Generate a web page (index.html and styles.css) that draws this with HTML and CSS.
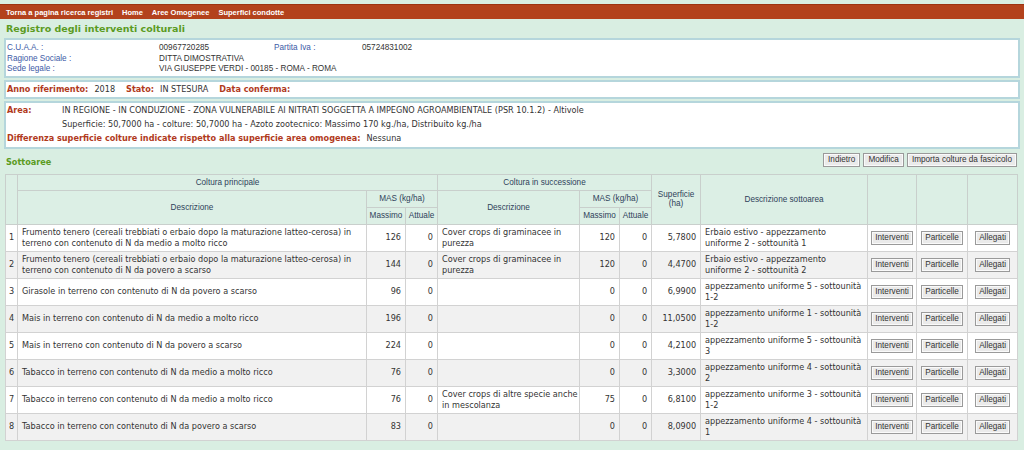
FILE: index.html
```html
<!DOCTYPE html>
<html lang="it">
<head>
<meta charset="utf-8">
<title>Registro degli interventi colturali</title>
<link rel="stylesheet" href="styles.css">
</head>
<body>
<div class="page">
  <nav class="topbar">
    <a href="#">Torna a pagina ricerca registri</a>
    <a href="#">Home</a>
    <a href="#">Aree Omogenee</a>
    <a href="#">Superfici condotte</a>
  </nav>
  <h1 class="title">Registro degli interventi colturali</h1>

  <div class="box anag">
    <span class="lbl">C.U.A.A. :</span><span class="val">00967720285</span><span class="lbl">Partita Iva :</span><span class="val">05724831002</span>
    <span class="lbl">Ragione Sociale :</span><span class="val span3">DITTA DIMOSTRATIVA</span>
    <span class="lbl">Sede legale :</span><span class="val span3">VIA GIUSEPPE VERDI - 00185 - ROMA - ROMA</span>
  </div>

  <div class="box info">
    <span class="rlbl">Anno riferimento:</span><span class="rval">2018</span>
    <span class="rlbl">Stato:</span><span class="rval">IN STESURA</span>
    <span class="rlbl">Data conferma:</span>
  </div>

  <div class="box area">
    <div class="arow"><span class="rlbl alab">Area:</span><span class="rval">IN REGIONE - IN CONDUZIONE - ZONA VULNERABILE AI NITRATI SOGGETTA A IMPEGNO AGROAMBIENTALE (PSR 10.1.2) - Altivole</span></div>
    <div class="arow"><span class="alab"></span><span class="rval">Superficie: 50,7000 ha - colture: 50,7000 ha - Azoto zootecnico: Massimo 170 kg./ha, Distribuito kg./ha</span></div>
    <div class="arow"><span class="rlbl">Differenza superficie colture indicate rispetto alla superficie area omogenea:</span><span class="rval nes">Nessuna</span></div>
  </div>

  <div class="subhead">
    <h2 class="sub">Sottoaree</h2>
    <div class="actions">
      <button class="btn">Indietro</button>
      <button class="btn">Modifica</button>
      <button class="btn">Importa colture da fascicolo</button>
    </div>
  </div>

  <table class="grid">
    <colgroup>
      <col style="width:12px"><col style="width:349px"><col style="width:39px"><col style="width:32px">
      <col style="width:142px"><col style="width:40px"><col style="width:32px"><col style="width:49px">
      <col style="width:167px"><col style="width:49px"><col style="width:51px"><col style="width:50px">
    </colgroup>
    <thead>
      <tr class="h1">
        <th rowspan="3"></th>
        <th colspan="3">Coltura principale</th>
        <th colspan="3">Coltura in successione</th>
        <th rowspan="3">Superficie<br>(ha)</th>
        <th rowspan="3">Descrizione sottoarea</th>
        <th rowspan="3"></th><th rowspan="3"></th><th rowspan="3"></th>
      </tr>
      <tr class="h2">
        <th rowspan="2">Descrizione</th>
        <th colspan="2">MAS (kg/ha)</th>
        <th rowspan="2">Descrizione</th>
        <th colspan="2">MAS (kg/ha)</th>
      </tr>
      <tr class="h3">
        <th>Massimo</th><th>Attuale</th><th>Massimo</th><th>Attuale</th>
      </tr>
    </thead>
    <tbody>
      <tr>
        <td class="idx">1</td>
        <td>Frumento tenero (cereali trebbiati o erbaio dopo la maturazione latteo-cerosa) in terreno con contenuto di N da medio a molto ricco</td>
        <td class="num">126</td><td class="num">0</td>
        <td class="sc">Cover crops di graminacee in purezza</td>
        <td class="num">120</td><td class="num">0</td><td class="num">5,7800</td>
        <td class="sd">Erbaio estivo - appezzamento uniforme 2 - sottounità 1</td>
        <td class="b"><button class="btn">Interventi</button></td><td class="b"><button class="btn">Particelle</button></td><td class="b"><button class="btn">Allegati</button></td>
      </tr>
      <tr>
        <td class="idx">2</td>
        <td>Frumento tenero (cereali trebbiati o erbaio dopo la maturazione latteo-cerosa) in terreno con contenuto di N da povero a scarso</td>
        <td class="num">144</td><td class="num">0</td>
        <td class="sc">Cover crops di graminacee in purezza</td>
        <td class="num">120</td><td class="num">0</td><td class="num">4,4700</td>
        <td class="sd">Erbaio estivo - appezzamento uniforme 2 - sottounità 2</td>
        <td class="b"><button class="btn">Interventi</button></td><td class="b"><button class="btn">Particelle</button></td><td class="b"><button class="btn">Allegati</button></td>
      </tr>
      <tr>
        <td class="idx">3</td>
        <td>Girasole in terreno con contenuto di N da povero a scarso</td>
        <td class="num">96</td><td class="num">0</td>
        <td class="sc"></td>
        <td class="num">0</td><td class="num">0</td><td class="num">6,9900</td>
        <td class="sd">appezzamento uniforme 5 - sottounità 1-2</td>
        <td class="b"><button class="btn">Interventi</button></td><td class="b"><button class="btn">Particelle</button></td><td class="b"><button class="btn">Allegati</button></td>
      </tr>
      <tr>
        <td class="idx">4</td>
        <td>Mais in terreno con contenuto di N da medio a molto ricco</td>
        <td class="num">196</td><td class="num">0</td>
        <td class="sc"></td>
        <td class="num">0</td><td class="num">0</td><td class="num">11,0500</td>
        <td class="sd">appezzamento uniforme 1 - sottounità 1-2</td>
        <td class="b"><button class="btn">Interventi</button></td><td class="b"><button class="btn">Particelle</button></td><td class="b"><button class="btn">Allegati</button></td>
      </tr>
      <tr>
        <td class="idx">5</td>
        <td>Mais in terreno con contenuto di N da povero a scarso</td>
        <td class="num">224</td><td class="num">0</td>
        <td class="sc"></td>
        <td class="num">0</td><td class="num">0</td><td class="num">4,2100</td>
        <td class="sd">appezzamento uniforme 5 - sottounità 3</td>
        <td class="b"><button class="btn">Interventi</button></td><td class="b"><button class="btn">Particelle</button></td><td class="b"><button class="btn">Allegati</button></td>
      </tr>
      <tr>
        <td class="idx">6</td>
        <td>Tabacco in terreno con contenuto di N da medio a molto ricco</td>
        <td class="num">76</td><td class="num">0</td>
        <td class="sc"></td>
        <td class="num">0</td><td class="num">0</td><td class="num">3,3000</td>
        <td class="sd">appezzamento uniforme 4 - sottounità 2</td>
        <td class="b"><button class="btn">Interventi</button></td><td class="b"><button class="btn">Particelle</button></td><td class="b"><button class="btn">Allegati</button></td>
      </tr>
      <tr>
        <td class="idx">7</td>
        <td>Tabacco in terreno con contenuto di N da medio a molto ricco</td>
        <td class="num">76</td><td class="num">0</td>
        <td class="sc">Cover crops di altre specie anche in mescolanza</td>
        <td class="num">75</td><td class="num">0</td><td class="num">6,8100</td>
        <td class="sd">appezzamento uniforme 3 - sottounità 1-2</td>
        <td class="b"><button class="btn">Interventi</button></td><td class="b"><button class="btn">Particelle</button></td><td class="b"><button class="btn">Allegati</button></td>
      </tr>
      <tr>
        <td class="idx">8</td>
        <td>Tabacco in terreno con contenuto di N da povero a scarso</td>
        <td class="num">83</td><td class="num">0</td>
        <td class="sc"></td>
        <td class="num">0</td><td class="num">0</td><td class="num">8,0900</td>
        <td class="sd">appezzamento uniforme 4 - sottounità 1</td>
        <td class="b"><button class="btn">Interventi</button></td><td class="b"><button class="btn">Particelle</button></td><td class="b"><button class="btn">Allegati</button></td>
      </tr>
    </tbody>
  </table>
</div>
</body>
</html>
```

FILE: styles.css
```css
html, body {
  margin: 0;
  padding: 0;
  background: #d9eee2;
}
.page {
  padding-top: 4px;
  font-family: "DejaVu Sans", Verdana, sans-serif;
  font-size: 8.15px;
  color: #333;
}
.topbar {
  background: #b3421c;
  border-top: 1px solid #9c3412;
  height: 14px;
  display: flex;
  align-items: center;
  gap: 9px;
  padding-left: 6px;
}
.topbar a {
  color: #fff;
  text-decoration: none;
  font-family: "Liberation Sans", Arial, sans-serif;
  font-weight: bold;
  font-size: 7.5px;
}
.title {
  margin: 0;
  padding: 4px 0 0 6px;
  height: 15px;
  font-size: 9.5px;
  font-weight: bold;
  color: #5b9b22;
  font-family: "DejaVu Sans", Verdana, sans-serif;
}
.box {
  margin: 0 4px 2px 4px;
  background: #fff;
  border: 2px solid #b5d6dc;
}
.anag {
  display: grid;
  grid-template-columns: 152px 115px 88px 1fr;
  padding: 3px 1px 1px 1px;
  font-family: "Liberation Sans", Arial, sans-serif;
  font-size: 8.2px;
  line-height: 10.5px;
}
.anag .lbl { color: #3c5aa6; }
.anag .val { color: #333; }
.anag .span3 { grid-column: span 3; }
.info {
  height: 15px;
  display: flex;
  align-items: center;
  padding-left: 1px;
}
.rlbl {
  color: #b13a1c;
  font-weight: bold;
  margin-right: 6px;
}
.rval {
  color: #333;
  margin-right: 11px;
}
.area {
  padding: 0 1px 2px 1px;
}
.arow {
  display: flex;
  height: 14px;
  align-items: center;
}
.alab {
  width: 55px;
  flex: none;
  margin-right: 0;
}
.nes { margin-left: 0; }
.subhead {
  display: flex;
  justify-content: space-between;
  align-items: center;
  padding: 1px 7px 0 6px;
  height: 16px;
}
.sub {
  margin: 0;
  font-size: 8.15px;
  font-weight: bold;
  color: #5b9b22;
  padding-top: 5px;
}
.actions {
  display: flex;
  gap: 3px;
}
.btn {
  font-family: "Liberation Sans", Arial, sans-serif;
  font-size: 8.2px;
  color: #333;
  background: #eaeaea;
  border: 1px solid #9a9a9a;
  box-shadow: inset 0 0 0 1px #fafafa;
  padding: 1px 4px;
  height: 14px;
  line-height: 10px;
  margin: 0;
  border-radius: 0;
}
.grid {
  margin: 6px 0 0 5px;
  width: 1012px;
  table-layout: fixed;
  border-collapse: collapse;
  background: #fff;
}
.grid th {
  background: #dcefe5;
  border: 1px solid #c9cfcc;
  font-family: "Liberation Sans", Arial, sans-serif;
  font-weight: normal;
  font-size: 8.2px;
  color: #2f3f5a;
  padding: 0;
  text-align: center;
  vertical-align: middle;
}
.grid tr.h1 th { height: 15px; }
.grid tr.h2 th { height: 16px; }
.grid tr.h3 th { height: 16px; }
.grid td {
  border: 1px solid #d2d2d2;
  height: 26px;
  padding: 0 3px 0 4px;
  line-height: 11px;
  vertical-align: middle;
  color: #333;
}
.grid td.sd { padding-right: 5px; }
.grid td.sc { padding-right: 1px; }
.grid tbody tr:nth-child(even) td { background: #f1f1f1; }
.grid td.idx { text-align: center; padding: 0; }
.grid td.num { text-align: right; padding: 0 4px 0 0; }
.grid td.b { text-align: center; padding: 0; }
.grid td.b .btn { padding: 1px 3px; }
```
